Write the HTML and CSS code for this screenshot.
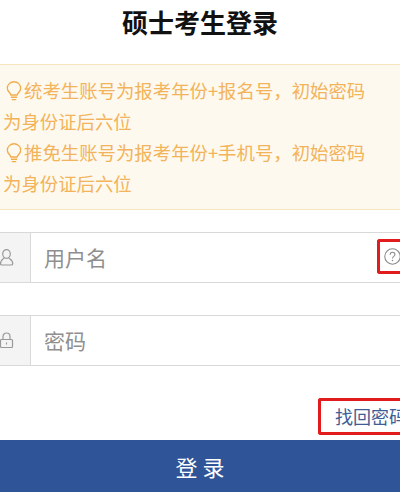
FILE: index.html
```html
<!DOCTYPE html>
<html lang="zh">
<head>
<meta charset="utf-8">
<title>硕士考生登录</title>
<link rel="stylesheet" href="styles.css">
</head>
<body>
<main class="page">
  <h1 class="title">硕士考生登录</h1>
  <section class="notice">
    <p class="notice-line"><svg class="bulb" viewBox="0 0 18 22" aria-hidden="true"><path d="M5.5 15.5C5 13 1.5 11.5 1.5 7.8A7.5 7.2 0 0 1 16.5 7.8C16.5 11.5 13 13 12.5 15.5Z"/><path d="M5.5 18H12.5M6.5 20.7H11.5"/></svg>统考生账号为报考年份+报名号，初始密码</p>
    <p class="notice-line">为身份证后六位</p>
    <p class="notice-line"><svg class="bulb" viewBox="0 0 18 22" aria-hidden="true"><path d="M5.5 15.5C5 13 1.5 11.5 1.5 7.8A7.5 7.2 0 0 1 16.5 7.8C16.5 11.5 13 13 12.5 15.5Z"/><path d="M5.5 18H12.5M6.5 20.7H11.5"/></svg>推免生账号为报考年份+手机号，初始密码</p>
    <p class="notice-line">为身份证后六位</p>
  </section>
  <div class="field field-user">
    <span class="addon"><svg class="addon-icon" viewBox="0 0 14 17" aria-hidden="true"><ellipse cx="6.5" cy="5" rx="3.8" ry="4.3"/><path d="M4.2 9.2C2.5 10.3 0.5 11 0.5 14.7C0.5 15.6 1 16 2 16H11C12 16 12.8 15.6 12.8 14.7C12.8 11 10.5 10.3 8.8 9.2"/></svg></span>
    <span class="placeholder">用户名</span>
    <span class="help"><svg class="help-icon" viewBox="0 0 18 18" aria-hidden="true"><circle cx="9" cy="9" r="8.2"/><path d="M6.5 7.2C6.5 5.6 7.6 4.6 9 4.6C10.5 4.6 11.6 5.6 11.6 7C11.6 8.8 9 9 9 11"/><circle class="dot" cx="9" cy="13.3" r="0.8"/></svg></span>
  </div>
  <div class="field field-pass">
    <span class="addon"><svg class="addon-icon" viewBox="0 0 14 17" aria-hidden="true"><rect x="0.5" y="7.5" width="12" height="8" rx="1"/><path d="M3 7.5V4.5A3.5 3.5 0 0 1 10 4.5V7.5M6.5 10.5V12.5"/></svg></span>
    <span class="placeholder">密码</span>
  </div>
  <div class="forgot-row"><a class="forgot">找回密码</a></div>
  <button class="submit" type="button">登 录</button>
</main>
</body>
</html>
```
FILE: styles.css
```css
* { box-sizing: border-box; }
html, body { margin: 0; height: 100%; overflow: hidden; background: #fff; }
.page {
  width: 400px;
  height: 503px;
  overflow: hidden;
  font-family: "Noto Sans CJK SC", "Liberation Sans", sans-serif;
}
.title {
  margin: 0;
  height: 64px;
  padding-top: 2px;
  text-align: center;
  font-size: 26px;
  line-height: 40px;
  font-weight: 700;
  color: #111;
}
.notice {
  height: 146px;
  padding: 10px 0 0 3px;
  background: #fef9ef;
  border-top: 1px solid #f5e6c0;
  border-bottom: 1px solid #f5e6c0;
  color: #f2b35a;
  font-size: 18.4px;
}
.notice-line {
  margin: 0;
  height: 31px;
  line-height: 31px;
  white-space: nowrap;
  display: flex;
  align-items: center;
}
.bulb {
  width: 16px;
  height: 20px;
  flex: none;
  margin: 0 2px 0 3px;
  fill: none;
  stroke: #f0ad4e;
  stroke-width: 1.5;
}
.field {
  display: flex;
  align-items: stretch;
  height: 51px;
  border-top: 1px solid #d9d9d9;
  border-bottom: 1px solid #d9d9d9;
  background: #fff;
}
.field-user { margin-top: 22px; }
.field-pass { margin-top: 32px; }
.addon {
  width: 31px;
  flex: none;
  display: flex;
  align-items: center;
  background: #f4f4f4;
  border-right: 1px solid #d9d9d9;
}
.addon-icon {
  width: 14px;
  height: 17px;
  fill: none;
  stroke: #999;
  stroke-width: 1.2;
  overflow: visible;
}
.placeholder {
  margin-left: 13px;
  flex: 1;
  font-size: 21px;
  line-height: 49px;
  color: #8f8f8f;
}
.help {
  width: 23px;
  height: 35px;
  margin-top: 6px;
  flex: none;
  display: flex;
  align-items: center;
  padding-left: 4px;
  border: 3px solid #e21c1c;
  border-right: 0;
  border-radius: 3px 0 0 3px;
}
.help-icon {
  width: 17px;
  height: 17px;
  flex: none;
  fill: none;
  stroke: #888;
  stroke-width: 1.1;
}
.help-icon .dot { fill: #888; stroke: none; }
.forgot-row {
  display: flex;
  justify-content: flex-end;
  margin-top: 32px;
  height: 37px;
  overflow: hidden;
}
.forgot {
  width: 82px;
  height: 37px;
  padding-left: 14px;
  border: 3px solid #e21c1c;
  border-right: 0;
  border-radius: 3px 0 0 3px;
  font-size: 18px;
  line-height: 31px;
  color: #3f5c94;
  white-space: nowrap;
  overflow: hidden;
}
.submit {
  display: block;
  width: 100%;
  height: 52px;
  margin: 5px 0 0;
  padding: 0;
  border: 0;
  background: #2f5497;
  color: #fff;
  font: inherit;
  font-size: 22px;
  line-height: 52px;
}
```
